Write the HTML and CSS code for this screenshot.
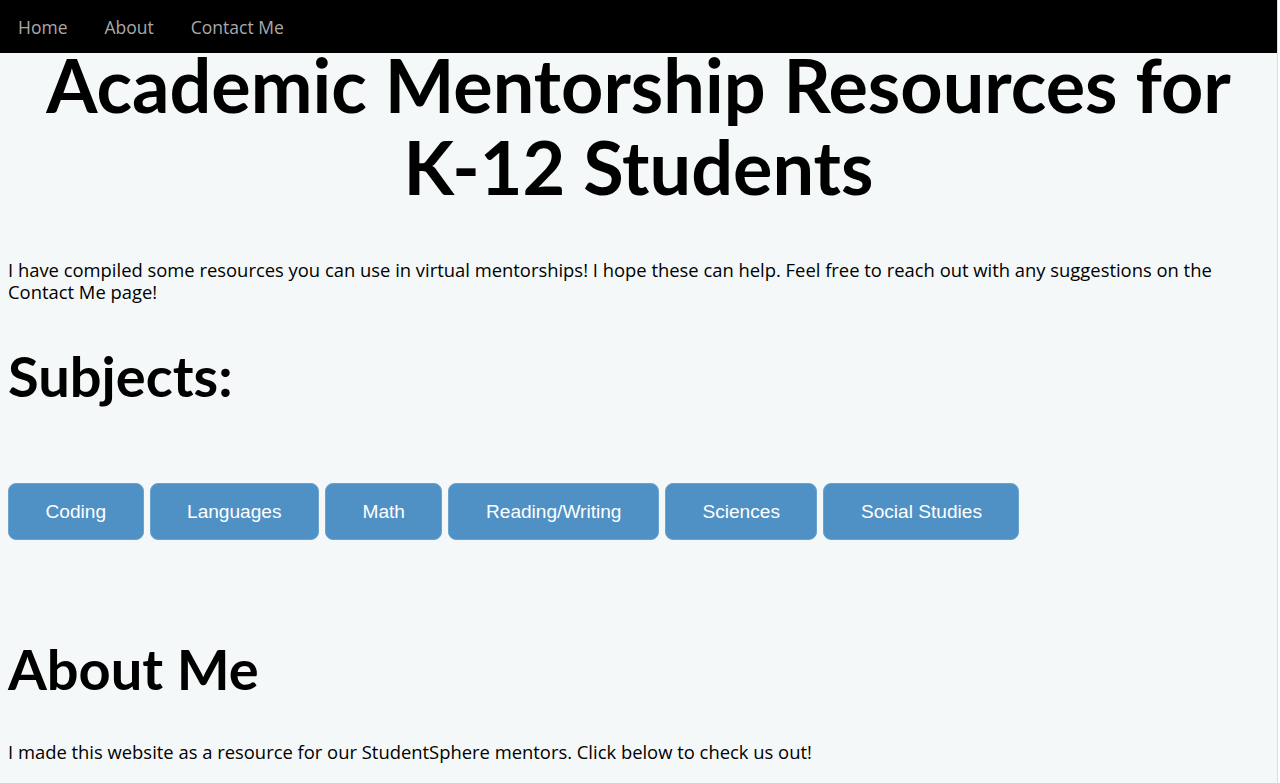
FILE: index.html
```html
<!DOCTYPE html>
<html>
<head>
<meta charset="utf-8">
<title>Academic Mentorship Resources</title>
<link rel="stylesheet" href="styles.css">
</head>
<body>
<nav class="topnav">
  <a href="#">Home</a>
  <a href="#">About</a>
  <a href="#">Contact Me</a>
</nav>
<main class="content">
  <h1 class="title">Academic Mentorship Resources for <span class="nowrap">K-12 Students</span></h1>
  <p class="text intro">I have compiled some resources you can use in virtual mentorships! I hope these can help. Feel free to reach out with any suggestions on the Contact Me page!</p>
  <h2 class="heading subjects">Subjects:</h2>
  <div class="buttons">
    <button class="btn">Coding</button>
    <button class="btn">Languages</button>
    <button class="btn">Math</button>
    <button class="btn">Reading/Writing</button>
    <button class="btn">Sciences</button>
    <button class="btn">Social Studies</button>
  </div>
  <h2 class="heading about">About Me</h2>
  <p class="text outro">I made this website as a resource for our StudentSphere mentors. Click below to check us out!</p>
</main>
</body>
</html>
```

FILE: styles.css
```css
html {
  margin: 0;
  padding: 0;
  background: #ffffff;
}
body {
  margin: 0 2px 0 0;
  padding: 0;
  min-height: 783px;
  background: #f5f8f8;
  border-right: 1px solid #d9dddd;
  font-family: "Open Sans", "Liberation Sans", sans-serif;
  color: #000;
}
.topnav {
  background: #000;
  height: 53px;
  display: flex;
  align-items: center;
}
.topnav a {
  color: #a9a9a9;
  text-decoration: none;
  font-size: 17.5px;
  line-height: 22px;
  padding: 0 19px 0 18px;
}
.content {
  padding: 0 8px;
}
.title {
  margin: -9px 0 0;
  font-family: "Lato", "Open Sans", sans-serif;
  font-size: 73.8px;
  line-height: 82px;
  text-align: center;
  font-weight: bold;
}
.nowrap {
  white-space: nowrap;
}
.text {
  font-size: 18.4px;
  line-height: 22px;
  margin: 0;
}
.intro {
  margin-top: 51px;
}
.heading {
  font-family: "Lato", "Open Sans", sans-serif;
  font-size: 56px;
  line-height: 64px;
  margin: 0;
  font-weight: bold;
}
.subjects {
  margin-top: 41px;
}
.buttons {
  display: flex;
  gap: 6px;
  margin-top: 75px;
}
.btn {
  font-family: "Liberation Sans", Arial, sans-serif;
  font-size: 19.1px;
  line-height: 23px;
  color: #fff;
  background: #4f91c4;
  border: 1px solid #6aa3cf;
  border-radius: 8px;
  padding: 16px 36.5px;
  height: 57px;
  cursor: pointer;
}
.about {
  margin-top: 97px;
}
.outro {
  margin-top: 40px;
}
```
